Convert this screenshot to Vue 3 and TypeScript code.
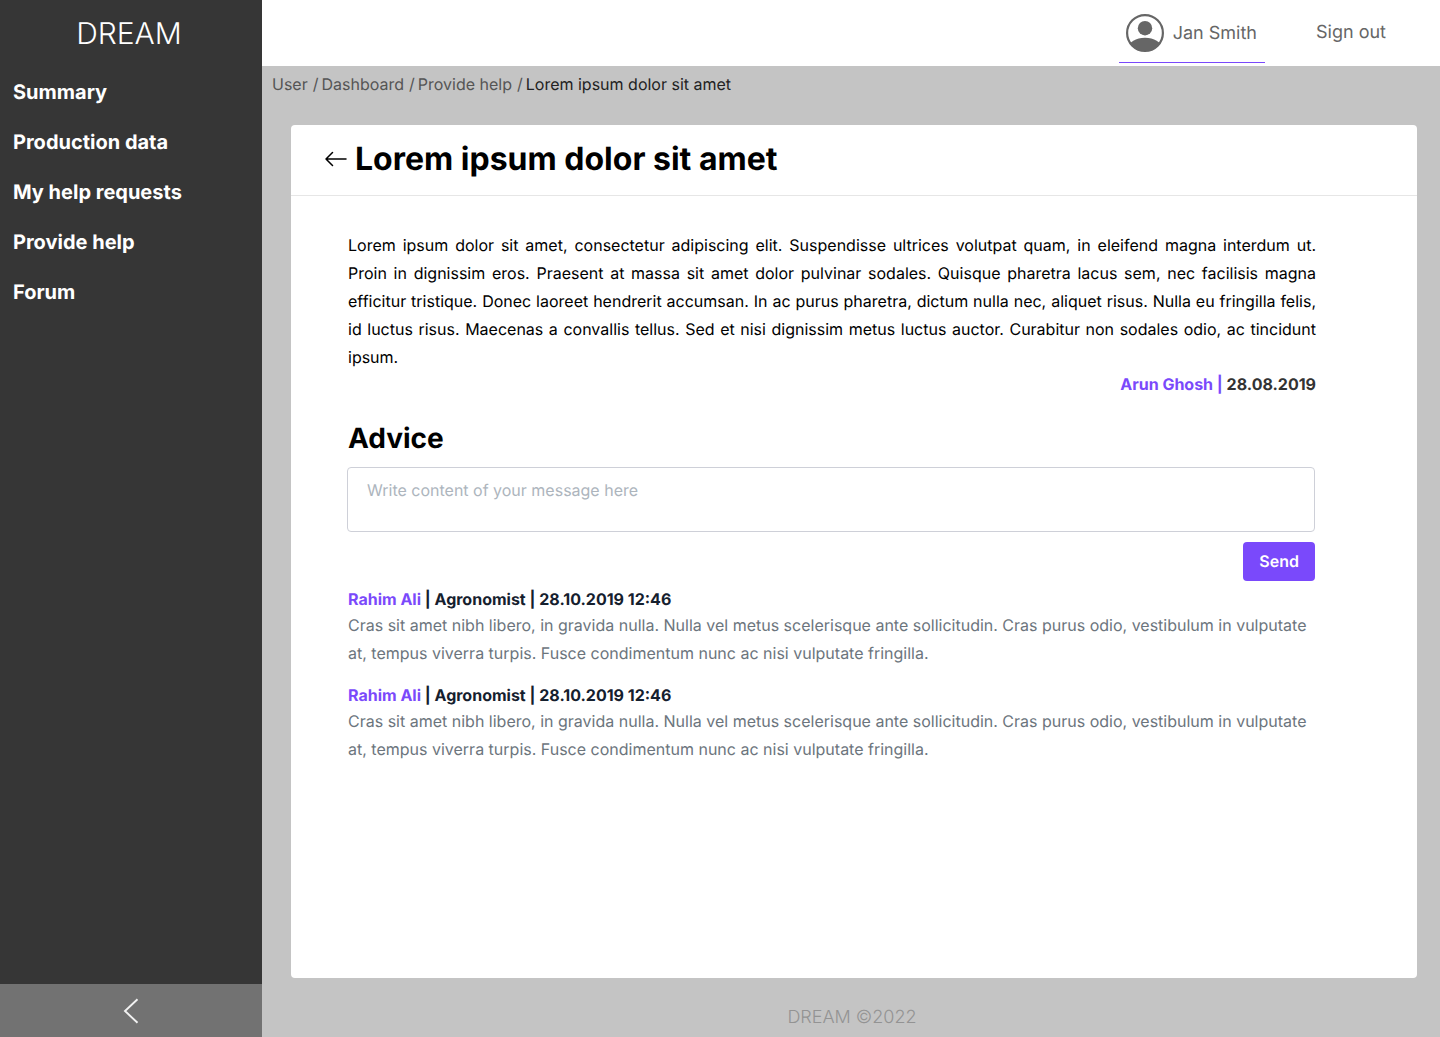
<script setup lang="ts">
import { ref } from 'vue'

interface Comment {
  id: number
  author: string
  role: string
  date: string
  text: string
}

const navItems: string[] = ['Summary', 'Production data', 'My help requests', 'Provide help', 'Forum']
const crumbs: string[] = ['User', 'Dashboard', 'Provide help']
const title = 'Lorem ipsum dolor sit amet'
const message = ref('')
const adviceText =
  'Cras sit amet nibh libero, in gravida nulla. Nulla vel metus scelerisque ante sollicitudin. Cras purus odio, vestibulum in vulputate at, tempus viverra turpis. Fusce condimentum nunc ac nisi vulputate fringilla.'

const comments = ref<Comment[]>([
  { id: 1, author: 'Rahim Ali', role: 'Agronomist', date: '28.10.2019 12:46', text: adviceText },
  { id: 2, author: 'Rahim Ali', role: 'Agronomist', date: '28.10.2019 12:46', text: adviceText },
])
</script>

<template>
  <div class="layout">
    <aside class="sidebar">
      <div class="brand">DREAM</div>
      <nav class="nav" aria-label="Main">
        <a v-for="item in navItems" :key="item" href="#">{{ item }}</a>
      </nav>
      <button class="collapse" type="button" aria-label="Collapse sidebar">
        <svg width="16" height="26" viewBox="0 0 16 26" fill="none" stroke="#f2f2f2" stroke-width="1.9">
          <path d="M14.5 1.2 2 13l12.500 11.800" />
        </svg>
      </button>
    </aside>

    <div class="page">
      <header class="topbar">
        <a class="profile" href="#">
          <svg width="38" height="38" viewBox="0 0 38 38">
            <defs>
              <clipPath id="avatar-clip"><circle cx="19" cy="19" r="18" /></clipPath>
            </defs>
            <circle cx="19" cy="19" r="17.900" fill="#fff" stroke="#666" stroke-width="2.200" />
            <circle cx="19" cy="14.200" r="7.200" fill="#666" />
            <ellipse cx="19" cy="34" rx="16.500" ry="10.300" fill="#666" clip-path="url(#avatar-clip)" />
          </svg>
          <span>Jan Smith</span>
        </a>
        <a class="signout" href="#">Sign out</a>
      </header>

      <nav class="crumbs" aria-label="Breadcrumb">
        <template v-for="crumb in crumbs" :key="crumb">
          <a href="#">{{ crumb }}</a><span class="slash">/</span>
        </template>
        <span class="current">{{ title }}</span>
      </nav>

      <main class="card">
        <div class="card-head">
          <button class="back" type="button" aria-label="Back">
            <svg width="22" height="16" viewBox="0 0 22 16" fill="none" stroke="#000" stroke-width="1.500" stroke-linecap="round" stroke-linejoin="round">
              <path d="M21 8H1M7.500 1.500 1 8l6.500 6.500" />
            </svg>
          </button>
          <h1>{{ title }}</h1>
        </div>

        <div class="card-body">
          <p class="request">
            Lorem ipsum dolor sit amet, consectetur adipiscing elit. Suspendisse ultrices volutpat quam, in eleifend magna interdum ut. Proin in dignissim eros. Praesent at massa sit amet dolor pulvinar sodales. Quisque pharetra lacus sem, nec facilisis magna efficitur tristique. Donec laoreet hendrerit accumsan. In ac purus pharetra, dictum nulla nec, aliquet risus. Nulla eu fringilla felis, id luctus risus. Maecenas a convallis tellus. Sed et nisi dignissim metus luctus auctor. Curabitur non sodales odio, ac tincidunt ipsum.
          </p>
          <div class="byline"><span class="accent">Arun Ghosh |</span> 28.08.2019</div>

          <h2>Advice</h2>
          <form class="advice-form" @submit.prevent>
            <textarea v-model="message" aria-label="Message" placeholder="Write content of your message here"></textarea>
            <button class="send" type="submit">Send</button>
          </form>

          <article v-for="c in comments" :key="c.id" class="comment">
            <h3><span class="accent">{{ c.author }}</span> | {{ c.role }} | {{ c.date }}</h3>
            <p>{{ c.text }}</p>
          </article>
        </div>
      </main>

      <footer class="footer">DREAM ©2022</footer>
    </div>
  </div>
</template>

<style>
body {
  margin: 0;
}
</style>

<style scoped>
.layout {
  display: flex;
  min-height: 100vh;
  background: #c4c4c4;
  font-family: Inter, 'Liberation Sans', sans-serif;
  font-size: 16px;
  text-rendering: geometricPrecision;
}
.layout * {
  box-sizing: border-box;
}
a {
  color: inherit;
  text-decoration: none;
}
button {
  border: 0;
  background: none;
  font: inherit;
  text-rendering: inherit;
  cursor: pointer;
}
h1,
h2,
h3,
p {
  margin: 0;
}
.sidebar {
  display: flex;
  flex-direction: column;
  flex: 0 0 262px;
  background: #363636;
  color: #fff;
}
.brand {
  height: 67px;
  padding-right: 4px;
  font-size: 30px;
  font-weight: 300;
  line-height: 69px;
  text-align: center;
}
.nav {
  display: flex;
  flex: 1;
  flex-direction: column;
  padding-left: 13px;
  font-size: 20px;
  font-weight: 700;
  line-height: 50px;
}
.collapse {
  display: flex;
  align-items: center;
  justify-content: center;
  height: 53px;
  background: #727272;
}
.page {
  display: flex;
  flex: 1;
  flex-direction: column;
  min-width: 0;
}
.topbar {
  display: flex;
  justify-content: flex-end;
  height: 66px;
  padding-right: 54px;
  background: #fff;
  color: #666;
  font-size: 18px;
}
.profile {
  display: flex;
  align-items: center;
  gap: 9px;
  height: 63px;
  margin-right: 51px;
  padding: 4px 8px 0 7px;
  border-bottom: 1px solid #7a49fb;
  line-height: 24px;
}
.profile span {
  padding-top: 2px;
}
.signout {
  line-height: 65px;
}
.crumbs {
  display: flex;
  padding: 0 10px;
  color: #555;
  line-height: 37px;
}
.slash {
  margin: 0 3px 0 5px;
}
.current {
  color: #222;
}
.card {
  flex: 1;
  margin: 22px 23px 0 29px;
  border-radius: 4px;
  background: #fff;
}
.card-head {
  display: flex;
  align-items: center;
  gap: 8px;
  height: 71px;
  padding: 0 34px 2px;
  border-bottom: 1px solid #e6e6e6;
}
.back {
  display: flex;
  padding: 0;
}
h1 {
  font-size: 32px;
  font-weight: 700;
  line-height: 40px;
}
.card-body {
  padding: 35px 101px 40px 57px;
}
.request {
  line-height: 28px;
  text-align: justify;
}
.byline {
  color: #333;
  font-weight: 700;
  line-height: 26px;
  text-align: right;
}
.accent {
  color: #7a49fb;
}
h2 {
  margin-top: 20px;
  font-size: 28px;
  font-weight: 700;
  line-height: 42px;
}
.advice-form {
  display: flex;
  flex-direction: column;
  align-items: flex-end;
  gap: 10px;
  margin: 8px 1px 6px -1px;
}
textarea {
  display: block;
  width: 100%;
  height: 65px;
  padding: 12px 19px;
  border: 1px solid #ced0d8;
  border-radius: 4px;
  color: #333;
  font: inherit;
  line-height: 20px;
  resize: none;
  text-rendering: inherit;
}
textarea::placeholder {
  color: #adb5bd;
  opacity: 1;
}
.send {
  height: 39px;
  padding: 0 16px 2px;
  border-radius: 4px;
  background: #7a49fb;
  color: #fff;
  font-weight: 600;
}
.comment {
  margin-bottom: 16px;
}
h3 {
  color: #15202e;
  font-size: 16px;
  font-weight: 700;
  line-height: 24px;
}
.comment p {
  color: #6c757d;
  line-height: 28px;
}
.footer {
  padding: 21px 0 0 2px;
  color: #939393;
  font-size: 18px;
  font-weight: 300;
  line-height: 38px;
  text-align: center;
}
</style>
